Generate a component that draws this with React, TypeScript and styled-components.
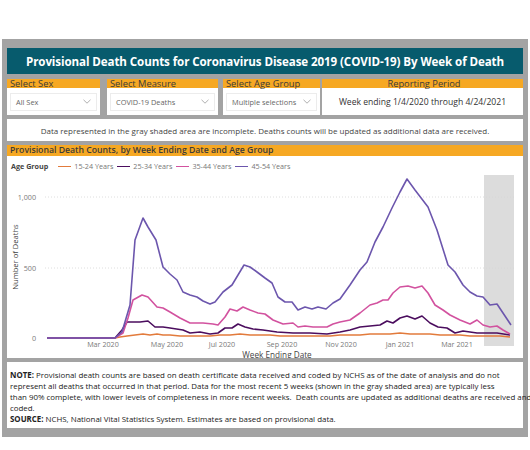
import React from "react";
import styled, { createGlobalStyle } from "styled-components";

const GlobalStyle = createGlobalStyle`
  html, body { margin: 0; padding: 0; background: #ffffff; }
  body { font-family: "Open Sans", "Noto Sans", sans-serif; }
`;

const ORANGE = "#f6a823";

const Page = styled.div`
  padding: 39px 2px 0 2px;
  width: 526px;
`;

const Frame = styled.div`
  background: #a3a3a3;
  padding: 9px 5px 9px 5px;
  display: flex;
  flex-direction: column;
`;

const TitleBar = styled.div`
  height: 26px;
  background: #075b6d;
  color: #ffffff;
  display: flex;
  align-items: center;
  justify-content: center;
  font-family: "Open Sans", sans-serif;
  font-weight: 700;
  font-size: 11.6px;
  letter-spacing: -0.1px;
  margin-bottom: 5px;
`;

const FilterRow = styled.div`
  display: flex;
  height: 36px;
  margin-bottom: 4px;
`;

const FilterCard = styled.div<{ $w: number; $ml: number }>`
  width: ${(p) => p.$w}px;
  margin-left: ${(p) => p.$ml}px;
  display: flex;
  flex-direction: column;
  background: #ffffff;
  flex: ${(p) => (p.$w ? "none" : "1")};
`;

const FilterLabel = styled.div<{ $center?: boolean }>`
  height: 9px;
  background: ${ORANGE};
  color: #3a3a3a;
  font-size: 9.3px;
  line-height: 10px;
  padding-left: 3px;
  text-align: ${(p) => (p.$center ? "center" : "left")};
  white-space: nowrap;
`;

const FilterBody = styled.div`
  flex: 1;
  display: flex;
  align-items: center;
  padding: 0 3px;
`;

const Dropdown = styled.div`
  flex: 1;
  height: 16px;
  border: 1px solid #ececec;
  display: flex;
  align-items: center;
  justify-content: space-between;
  padding: 0 5px 0 5px;
  font-size: 7.4px;
  color: #666666;
  white-space: nowrap;
  overflow: hidden;
`;

const PeriodText = styled.div`
  flex: 1;
  text-align: center;
  font-size: 8.6px;
  color: #333333;
  white-space: nowrap;
`;

const NoteBar = styled.div`
  height: 22px;
  background: #ffffff;
  margin-bottom: 4px;
  display: flex;
  align-items: center;
  justify-content: center;
  font-size: 8px;
  color: #444444;
  white-space: nowrap;
`;

const ChartPanel = styled.div`
  height: 213px;
  background: #ffffff;
  margin-bottom: 4px;
  display: flex;
  flex-direction: column;
`;

const ChartTitle = styled.div`
  height: 11px;
  background: ${ORANGE};
  color: #3a3a3a;
  font-size: 8.7px;
  font-weight: 600;
  line-height: 11px;
  padding-left: 3px;
  white-space: nowrap;
  overflow: hidden;
`;

const Legend = styled.div`
  height: 16px;
  box-sizing: border-box;
  padding: 5px 0 0 4px;
  display: flex;
  align-items: center;
  font-size: 7.2px;
  line-height: 11px;
  color: #777777;
  white-space: nowrap;
`;

const LegendTitle = styled.span`
  font-weight: 700;
  color: #444444;
  margin-right: 10px;
`;

const LegendItem = styled.span`
  display: flex;
  align-items: center;
  margin-right: 4px;
`;

const Swatch = styled.span<{ $c: string }>`
  width: 13px;
  height: 1.5px;
  background: ${(p) => p.$c};
  margin-right: 3px;
`;

const ChartSvg = styled.svg`
  display: block;
  width: 516px;
  height: 186px;
`;

const Notes = styled.div`
  height: 66px;
  box-sizing: border-box;
  background: #ffffff;
  padding: 8px 0 0 3px;
  font-size: 7.9px;
  line-height: 11px;
  color: #222222;
  white-space: nowrap;
`;

const Chevron = () => (
  <svg width="8" height="5" viewBox="0 0 8 5">
    <path d="M0.5 0.8 L4 4.2 L7.5 0.8" fill="none" stroke="#9a9a9a" strokeWidth="0.8" />
  </svg>
);

const series = [
  {
    name: "15-24 Years",
    color: "#e27b3c",
    pts: "47,338 115,338 120,337 127,336 135,335 143,334 150,335 157,334 163,335 170,335 180,336 190,336 200,336 210,336 220,335 230,335 240,334 250,335 260,335 270,335 280,336 290,336 300,336 310,336 320,336 330,336 340,335 350,335 360,335 370,334 380,334 390,334 400,333 410,334 420,334 430,334 440,335 450,335 460,335 470,336 480,336 490,336 500,336 510,337",
  },
  {
    name: "25-34 Years",
    color: "#4b0d5e",
    pts: "47,338 115,338 122,330 127,322 133,322 140,322 148,321 155,327 163,327 170,328 183,330 190,333 200,332 210,334 218,333 225,328 232,328 238,324 245,327 253,329 263,330 277,332 293,333 310,333 327,334 340,332 350,330 360,327 370,326 380,325 387,321 393,323 400,318 407,316 415,319 422,316 430,323 438,327 447,328 455,333 463,331 477,333 497,333 510,335",
  },
  {
    name: "35-44 Years",
    color: "#d2529f",
    pts: "47,338 115,338 123,333 128,318 133,300 142,295 148,297 157,307 163,308 170,312 180,318 190,323 203,323 213,324 218,325 225,317 230,309 237,311 243,307 250,310 258,313 265,314 273,320 283,324 293,323 298,327 305,326 313,327 327,327 333,324 340,322 350,320 360,313 370,305 377,303 383,300 388,300 393,293 400,287 408,286 415,288 422,286 428,293 435,305 443,310 450,315 460,320 470,324 477,320 483,325 490,327 497,326 503,330 510,334",
  },
  {
    name: "45-54 Years",
    color: "#6c56ad",
    pts: "47,338 115,338 122,332 130,305 135,240 143,218 148,227 156,240 163,267 170,274 177,280 183,292 190,295 197,297 203,301 210,304 215,302 223,292 232,285 238,275 244,265 250,267 257,272 265,278 272,283 278,297 285,302 292,302 298,310 305,307 312,309 318,307 326,309 333,303 340,299 350,285 360,270 367,262 375,242 383,227 392,208 400,192 407,179 415,190 428,207 437,230 448,265 455,272 463,285 470,292 477,296 483,297 490,305 497,304 503,313 511,325",
  },
];

const xLabels: [string, number][] = [
  ["Mar 2020", 103],
  ["May 2020", 167],
  ["Jul 2020", 222],
  ["Sep 2020", 282],
  ["Nov 2020", 341],
  ["Jan 2021", 400],
  ["Mar 2021", 457],
];

const yTicks: [string, number][] = [
  ["1,000", 197],
  ["500", 268],
  ["0", 338],
];

const filters = [
  { label: "Select Sex", value: "All Sex", w: 93, ml: 0 },
  { label: "Select Measure", value: "COVID-19 Deaths", w: 111, ml: 7 },
  { label: "Select Age Group", value: "Multiple selections", w: 97, ml: 5 },
];

export default function App() {
  return (
    <>
      <GlobalStyle />
      <Page>
        <Frame>
          <TitleBar>Provisional Death Counts for Coronavirus Disease 2019 (COVID-19) By Week of Death</TitleBar>
          <FilterRow>
            {filters.map((f) => (
              <FilterCard key={f.label} $w={f.w} $ml={f.ml}>
                <FilterLabel>{f.label}</FilterLabel>
                <FilterBody>
                  <Dropdown>
                    <span>{f.value}</span>
                    <Chevron />
                  </Dropdown>
                </FilterBody>
              </FilterCard>
            ))}
            <FilterCard $w={0} $ml={2}>
              <FilterLabel $center>Reporting Period</FilterLabel>
              <FilterBody>
                <PeriodText>Week ending 1/4/2020 through 4/24/2021</PeriodText>
              </FilterBody>
            </FilterCard>
          </FilterRow>
          <NoteBar>
            Data represented in the gray shaded area are incomplete. Deaths counts will be updated as additional data are received.
          </NoteBar>
          <ChartPanel>
            <ChartTitle>Provisional Death Counts, by Week Ending Date and Age Group</ChartTitle>
            <Legend>
              <LegendTitle>Age Group</LegendTitle>
              {series.map((s) => (
                <LegendItem key={s.name}>
                  <Swatch $c={s.color} />
                  {s.name}
                </LegendItem>
              ))}
            </Legend>
            <ChartSvg viewBox="7 172 516 186">
              <rect x="484" y="175" width="30" height="171" fill="#dcdcdc" />
              {yTicks.slice(0, 2).map(([, y]) => (
                <line key={y} x1="45" x2="515" y1={y} y2={y} stroke="#d6d6d6" strokeWidth="0.8" strokeDasharray="1 2" />
              ))}
              {yTicks.map(([t, y]) => (
                <text key={t} x="36" y={y + 2.5} textAnchor="end" fontSize="7.2" fill="#7a7a7a" fontFamily="Open Sans, sans-serif">
                  {t}
                </text>
              ))}
              <text
                x="0"
                y="0"
                transform="translate(17.5 257) rotate(-90)"
                textAnchor="middle"
                fontSize="7.6"
                fill="#444"
                fontFamily="Open Sans, sans-serif"
              >
                Number of Deaths
              </text>
              {xLabels.map(([t, x]) => (
                <text key={t} x={x} y="347" textAnchor="middle" fontSize="7.2" fill="#7a7a7a" fontFamily="Open Sans, sans-serif">
                  {t}
                </text>
              ))}
              <text x="277" y="357.5" textAnchor="middle" fontSize="8.2" fill="#444" fontFamily="Open Sans, sans-serif">
                Week Ending Date
              </text>
              {series.map((s) => (
                <polyline key={s.name} points={s.pts} fill="none" stroke={s.color} strokeWidth="1.6" strokeLinejoin="round" />
              ))}
            </ChartSvg>
          </ChartPanel>
          <Notes>
            <b>NOTE:</b> Provisional death counts are based on death certificate data received and coded by NCHS as of the date of analysis and do not
            <br />
            represent all deaths that occurred in that period. Data for the most recent 5 weeks (shown in the gray shaded area) are typically less
            <br />
            than 90% complete, with lower levels of completeness in more recent weeks.&nbsp; Death counts are updated as additional deaths are received and
            <br />
            coded.
            <br />
            <b>SOURCE:</b> NCHS, National Vital Statistics System. Estimates are based on provisional data.
          </Notes>
        </Frame>
      </Page>
    </>
  );
}
